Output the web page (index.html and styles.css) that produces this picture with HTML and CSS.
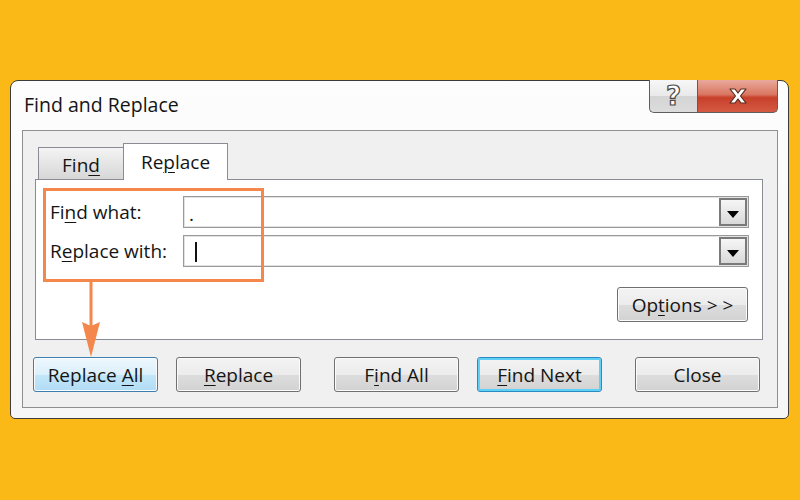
FILE: index.html
```html
<!DOCTYPE html>
<html lang="en">
<head>
    <meta charset="UTF-8">
    <meta name="viewport" content="width=device-width, initial-scale=1.0">
    <title>Find and Replace</title>
    <link rel="stylesheet" href="styles.css">
</head>
<body>
    <div class="window">
        <div class="titlebar">
            <span class="title">Find and Replace</span>
            <div class="controls">
                <span class="ctl help">?</span>
                <span class="ctl close">
                    <svg width="22" height="18" viewBox="0 0 22 18">
                        <path d="M3 2h5l3 4 3-4h5l-5.5 7 5.5 7h-5l-3-4-3 4H3l5.5-7z" fill="#fff" stroke="#5a2a20" stroke-width="1.2" stroke-linejoin="round"/>
                    </svg>
                </span>
            </div>
        </div>

        <div class="client">
            <div class="tabs">
                <div class="tab">Fin<u>d</u></div>
                <div class="tab active">Re<u>p</u>lace</div>
            </div>

            <div class="panel">
                <div class="field">
                    <label>Fi<u>n</u>d what:</label>
                    <div class="combo">
                        <span class="value">.</span>
                        <span class="drop"></span>
                    </div>
                </div>
                <div class="field">
                    <label>R<u>e</u>place with:</label>
                    <div class="combo">
                        <span class="value"><span class="caret"></span></span>
                        <span class="drop"></span>
                    </div>
                </div>
                <div class="options-row">
                    <button class="btn options">Op<u>t</u>ions &gt; &gt;</button>
                </div>
            </div>

            <div class="actions">
                <button class="btn hover">Replace <u>A</u>ll</button>
                <button class="btn"><u>R</u>eplace</button>
                <button class="btn spaced">F<u>i</u>nd All</button>
                <button class="btn default"><u>F</u>ind Next</button>
                <button class="btn spaced">Close</button>
            </div>
        </div>
    </div>

    <!-- annotation drawn over the dialog -->
    <svg class="annotation" width="800" height="500" viewBox="0 0 800 500">
        <rect x="44.5" y="189.5" width="218" height="91" fill="none" stroke="#f4874b" stroke-width="3"/>
        <line x1="91" y1="281" x2="91" y2="330" stroke="#f4874b" stroke-width="3"/>
        <polygon points="82,322 91,326 100,322 91,357" fill="#f4874b"/>
    </svg>
</body>
</html>
```

FILE: styles.css
```css
body {
    margin: 0;
    padding: 80px 0 0 10px;
    height: 500px;
    box-sizing: border-box;
    overflow: hidden;
    background: #fbb917;
    font-family: "Open Sans", "Noto Sans", sans-serif;
    font-size: 19px;
    color: #151515;
}
u {
    text-decoration-thickness: 1px;
    text-underline-offset: 3px;
}
.window {
    width: 779px;
    height: 339px;
    box-sizing: border-box;
    border: 1px solid #3c3c3c;
    border-radius: 8px 8px 5px 5px;
    background: linear-gradient(#fdfdfd, #f6f6f6);
    padding: 0 10px 10px 11px;
    position: relative;
}
.titlebar {
    height: 49px;
    display: flex;
    justify-content: space-between;
}
.title {
    align-self: center;
    padding-left: 2px;
    font-size: 19.5px;
    color: #151515;
    margin-top: -2px;
}
.controls {
    display: flex;
    margin-top: -1px;
    height: 33px;
}
.ctl {
    display: flex;
    align-items: center;
    justify-content: center;
    box-sizing: border-box;
    border: 1px solid #5e5e5e;
    border-top: none;
}
.help {
    width: 48px;
    border-radius: 0 0 0 5px;
    border-right: none;
    background: linear-gradient(#f7f7f7, #e9e9e9 50%, #d4d4d4 51%, #dcdcdc);
    font-family: "DejaVu Sans", sans-serif;
    font-weight: bold;
    font-size: 26px;
    line-height: 1;
    color: #fff;
    -webkit-text-stroke: 1.2px #4a4a4a;
}
.close {
    width: 81px;
    border-radius: 0 0 5px 0;
    background: linear-gradient(#e9a99c, #d97762 45%, #c7402a 55%, #d55a42);
}
.client {
    height: 278px;
    box-sizing: border-box;
    border: 1px solid #8f8f8f;
    background: #f0f0f0;
    padding: 12px 14px 0 12px;
}
.tabs {
    display: flex;
    align-items: flex-end;
    height: 36px;
    padding-left: 3px;
}
.tab {
    box-sizing: border-box;
    height: 32px;
    width: 86px;
    display: flex;
    align-items: center;
    justify-content: center;
    border: 1px solid #898c95;
    border-bottom: none;
    background: linear-gradient(#f4f4f4, #e5e5e5 50%, #d7d7d7);
    padding-top: 2px;
}
.tab.active {
    height: 37px;
    width: 105px;
    margin-left: -1px;
    margin-bottom: -1px;
    background: #fff;
    position: relative;
    padding-top: 0;
    padding-bottom: 0;
}
.panel {
    height: 161px;
    box-sizing: border-box;
    border: 1px solid #898c95;
    background: #fff;
    padding: 16px 13px 0 14px;
}
.field {
    display: flex;
    align-items: center;
    height: 32px;
    margin-bottom: 7px;
}
.field label {
    width: 133px;
    flex-shrink: 0;
}
.combo {
    flex: 1;
    height: 32px;
    box-sizing: border-box;
    border: 1px solid #9a9a9a;
    box-shadow: inset 0 0 0 1px #e2e2e2;
    display: flex;
    background: #fff;
}
.value {
    flex: 1;
    display: flex;
    align-items: center;
    padding: 3px 0 0 5px;
    position: relative;
}
.caret {
    position: absolute;
    left: 11px;
    top: 6px;
    width: 2px;
    height: 20px;
    background: #111;
}
.drop {
    width: 28px;
    margin: 1px;
    box-sizing: border-box;
    border: 2px solid #7a7a7a;
    background: linear-gradient(#f6f6f6, #d9d9d9);
    position: relative;
}
.drop::after {
    content: "";
    position: absolute;
    left: 6px;
    top: 11px;
    border-left: 6.5px solid transparent;
    border-right: 6.5px solid transparent;
    border-top: 7px solid #000;
}
.options-row {
    display: flex;
    justify-content: flex-end;
    margin-top: 20px;
    padding-right: 1px;
}
.btn {
    font: inherit;
    color: #151515;
    width: 125px;
    height: 35px;
    padding: 0;
    border: 1px solid #707070;
    border-radius: 3px;
    background: linear-gradient(#f3f3f3, #ececec 50%, #dddddd 51%, #d2d2d2);
    box-shadow: inset 0 0 0 1px #fbfbfb;
}
.options {
    width: 131px;
}
.actions {
    display: flex;
    gap: 18px;
    margin-top: 17px;
    margin-left: -2px;
}
.btn.spaced {
    margin-left: 15px;
}
.btn.hover {
    border-color: #3c7fb1;
    background: linear-gradient(#edf7fd, #dcf0fc 50%, #c3e6f9 51%, #b1dcf5);
}
.btn.default {
    border-color: #2c8ac2;
    box-shadow: inset 0 0 0 2px #5fd0f5;
}
.annotation {
    position: absolute;
    top: 0;
    left: 0;
    pointer-events: none;
}
```
